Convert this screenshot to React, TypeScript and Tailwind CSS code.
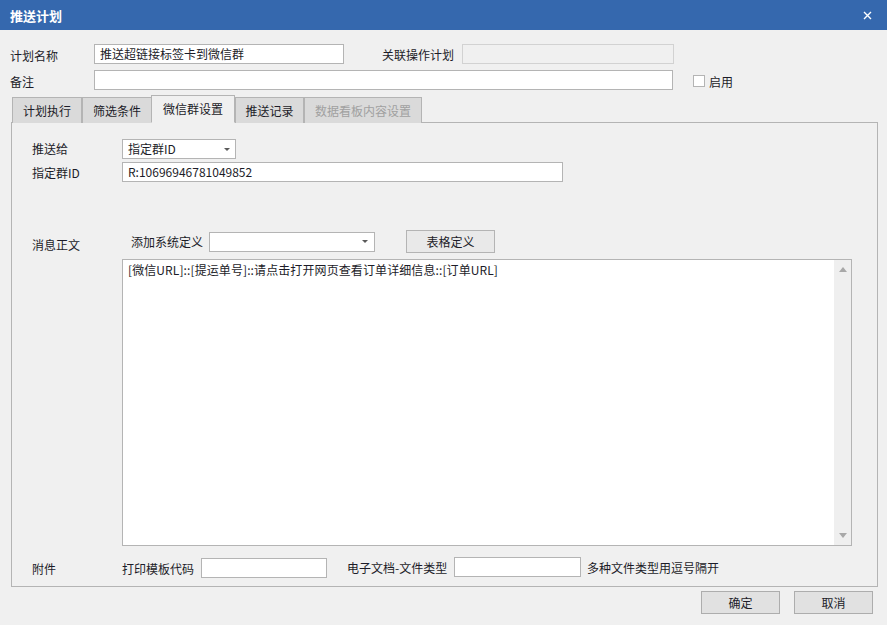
import React from 'react';

const font = "font-['Microsoft_YaHei','Noto_Sans_CJK_SC',sans-serif]";

function Field({ w, value, className = '' }: { w: string; value?: string; className?: string }) {
  return (
    <div className={`${w} h-[20px] bg-white border border-[#b4b4b4] pl-[5px] text-[12px] leading-[18px] text-[#1c1c28] whitespace-nowrap overflow-hidden ${className}`}>
      {value}
    </div>
  );
}

function Label({ w, children, className = '' }: { w?: string; children: React.ReactNode; className?: string }) {
  return <div className={`${w ?? ''} shrink-0 text-[12px] leading-[20px] text-[#1c1c28] whitespace-nowrap ${className}`}>{children}</div>;
}

function Arrow() {
  return <div className="w-0 h-0 border-l-[3px] border-r-[3px] border-t-[3px] border-l-transparent border-r-transparent border-t-[#5a5a5a]" />;
}

const tabs = [
  { name: '计划执行', w: 'w-[70px]', ml: 'ml-0' },
  { name: '筛选条件', w: 'w-[70px]', ml: 'ml-0' },
  { name: '微信群设置', w: 'w-[84px]', ml: 'ml-[-1px]', active: true },
  { name: '推送记录', w: 'w-[69px]', ml: 'ml-0' },
  { name: '数据看板内容设置', w: 'w-[118px]', ml: 'ml-0', disabled: true },
];

export default function App() {
  return (
    <div className={`w-[887px] h-[625px] bg-[#f0f0f0] flex flex-col ${font}`}>
      {/* title bar */}
      <div className="h-[30px] shrink-0 bg-[#3568ae] flex items-center justify-between pl-[10px] pr-[15px]">
        <span className="text-white text-[13px] font-bold leading-none">推送计划</span>
        <svg width="9" height="9" viewBox="0 0 9 9">
          <path d="M1 1L8 8M8 1L1 8" stroke="#ffffff" strokeWidth="1.4" />
        </svg>
      </div>

      {/* plan name row */}
      <div className="mt-[14px] pl-[10px] flex items-center h-[20px]">
        <Label w="w-[84px]" className="mt-[3px]">计划名称</Label>
        <Field w="w-[250px]" value="推送超链接标签卡到微信群" />
        <Label className="ml-[38px] w-[80px] mt-[2px]">关联操作计划</Label>
        <div className="w-[212px] h-[20px] border border-[#d2d2d2] bg-[#f0f0f0]" />
      </div>

      {/* remark row */}
      <div className="mt-[6px] pl-[10px] flex items-center h-[20px]">
        <Label w="w-[84px]" className="mt-[4px]">备注</Label>
        <Field w="w-[579px]" />
        <div className="ml-[20px] mt-[2px] w-[12px] h-[12px] bg-white border border-[#b4b4b4]" />
        <Label className="ml-[4px] mt-[3px]">启用</Label>
      </div>

      {/* tabs */}
      <div className="mt-[6px] h-[27px] pl-[12px] flex items-end relative z-10">
        {tabs.map((t) => (
          <div
            key={t.name}
            className={`${t.w} ${t.ml} shrink-0 flex items-center justify-center text-[12px] whitespace-nowrap border border-[#b4b4b4] ${
              t.active
                ? 'h-[28px] bg-[#f0f0f0] border-b-[#f0f0f0] text-[#1c1c28] relative z-10'
                : t.disabled
                ? 'h-[26px] bg-[#dadada] text-[#a0a0a0] border-b-0'
                : 'h-[26px] bg-[#dadada] text-[#1c1c28] border-b-0'
            }`}
          >
            {t.name}
          </div>
        ))}
      </div>

      {/* panel */}
      <div className="ml-[11px] w-[867px] h-[465px] -mt-[1px] border border-[#b4b4b4] flex flex-col pl-[20px] pt-[16px]">
        <div className="flex items-center h-[20px]">
          <Label w="w-[90px]" className="-mt-[1px]">推送给</Label>
          <div className="w-[114px] h-[20px] bg-white border border-[#b4b4b4] pl-[5px] pr-[5px] flex items-center justify-between text-[12px] text-[#1c1c28]">
            <span>指定群ID</span>
            <Arrow />
          </div>
        </div>
        <div className="mt-[3px] flex items-center h-[20px]">
          <Label w="w-[90px]" className="mt-[1px]">指定群ID</Label>
          <Field w="w-[441px]" value="R:10696946781049852" />
        </div>

        <div className="mt-[48px] flex items-center h-[23px]">
          <Label w="w-[90px]" className="mt-[6px]">消息正文</Label>
          <Label className="ml-[9px] w-[78px]">添加系统定义</Label>
          <div className="w-[166px] h-[20px] bg-white border border-[#b4b4b4] flex items-center justify-end pr-[6px]">
            <Arrow />
          </div>
          <div className="ml-[31px] w-[89px] h-[23px] border border-[#b4b4b4] bg-[#e9e9e9] flex items-center justify-center text-[12px] text-[#1c1c28]">
            表格定义
          </div>
        </div>

        <div className="mt-[6px] ml-[90px] w-[730px] h-[287px] bg-white border border-[#b4b4b4] flex">
          <div className="flex-1 pl-[5px] pt-[2px] text-[12px] leading-[16px] tracking-[0.1px] text-[#1c1c28] whitespace-nowrap">
            [微信URL]::[提运单号]::请点击打开网页查看订单详细信息::[订单URL]
          </div>
          <div className="w-[17px] bg-[#efefef] flex flex-col items-center justify-between py-[7px]">
            <div className="w-0 h-0 border-l-[4px] border-r-[4px] border-b-[5px] border-l-transparent border-r-transparent border-b-[#a8a8a8]" />
            <div className="w-0 h-0 border-l-[4px] border-r-[4px] border-t-[5px] border-l-transparent border-r-transparent border-t-[#a8a8a8]" />
          </div>
        </div>

        <div className="mt-[12px] flex items-center h-[20px]">
          <Label w="w-[90px]" className="mt-[2px]">附件</Label>
          <Label className="w-[79px] mt-[1px]">打印模板代码</Label>
          <Field w="w-[126px]" />
          <Label className="ml-[20px] w-[107px]">电子文档-文件类型</Label>
          <Field w="w-[127px]" className="-mt-[3px]" />
          <Label className="ml-[6px]">多种文件类型用逗号隔开</Label>
        </div>
      </div>

      {/* footer buttons */}
      <div className="mt-[4px] flex justify-end pr-[14px] gap-[14px]">
        <div className="w-[79px] h-[23px] border border-[#adadad] bg-[#e1e1e1] flex items-center justify-center text-[12px] text-[#1c1c28]">确定</div>
        <div className="w-[79px] h-[23px] border border-[#adadad] bg-[#e1e1e1] flex items-center justify-center text-[12px] text-[#1c1c28]">取消</div>
      </div>
    </div>
  );
}
